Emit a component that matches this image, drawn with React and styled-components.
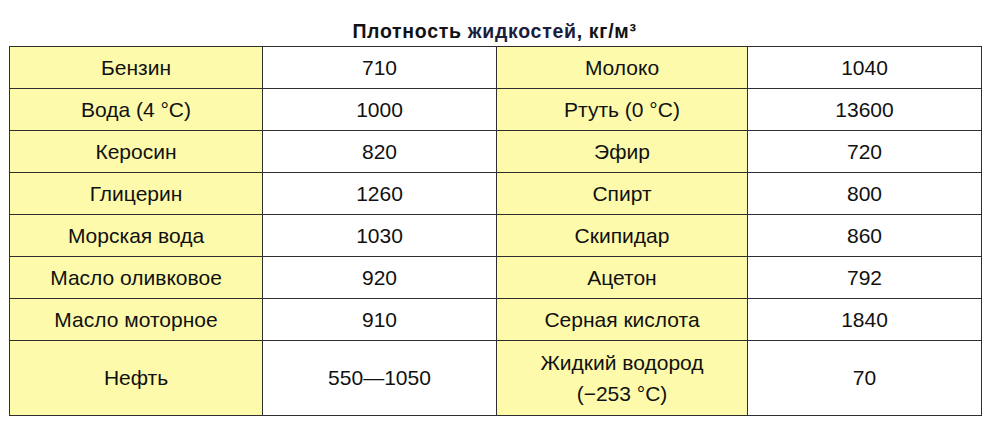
import React from 'react';
import styled, { createGlobalStyle } from 'styled-components';

const GlobalStyle = createGlobalStyle`
  html, body {
    margin: 0;
    padding: 0;
    background: #ffffff;
  }
  body {
    font-family: 'Liberation Sans', Arial, sans-serif;
    color: #111111;
  }
`;

const Page = styled.div`
  width: 993px;
  height: 441px;
  padding: 0 0 0 9px;
  box-sizing: border-box;
`;

const Title = styled.h1`
  margin: 0;
  width: 971px;
  height: 46px;
  box-sizing: border-box;
  padding-top: 20px;
  text-align: center;
  font-size: 19.5px;
  line-height: 23px;
  letter-spacing: 0.7px;
  font-weight: bold;
  color: #121214;
`;

const Accent = styled.span`
  color: #1a1d3c;
`;

const Table = styled.table`
  border-collapse: collapse;
  table-layout: fixed;
  width: 972px;
  font-size: 21px;
`;

const Row = styled.tr`
  height: ${({ tall }) => (tall ? '75px' : '42px')};
`;

const Cell = styled.td`
  border: 1.5px solid #2e2e2e;
  padding: 0;
  text-align: center;
  vertical-align: middle;
  line-height: ${({ twoLine }) => (twoLine ? '31px' : '22px')};
  background: ${({ name }) => (name ? '#fdfbab' : '#ffffff')};
  color: #111111;
  white-space: nowrap;
`;

const rows = [
  ['Бензин', '710', 'Молоко', '1040'],
  ['Вода (4 °C)', '1000', 'Ртуть (0 °C)', '13600'],
  ['Керосин', '820', 'Эфир', '720'],
  ['Глицерин', '1260', 'Спирт', '800'],
  ['Морская вода', '1030', 'Скипидар', '860'],
  ['Масло оливковое', '920', 'Ацетон', '792'],
  ['Масло моторное', '910', 'Серная кислота', '1840'],
];

const App = () => {
  return (
    <>
      <GlobalStyle />
      <Page>
        <Title>
          Плотность <Accent>жидкостей</Accent>, кг/м³
        </Title>
        <Table>
          <colgroup>
            <col style={{ width: 253 }} />
            <col style={{ width: 234 }} />
            <col style={{ width: 251 }} />
            <col style={{ width: 234 }} />
          </colgroup>
          <tbody>
            {rows.map((r) => (
              <Row key={r[0]}>
                <Cell name>{r[0]}</Cell>
                <Cell>{r[1]}</Cell>
                <Cell name>{r[2]}</Cell>
                <Cell>{r[3]}</Cell>
              </Row>
            ))}
            <Row tall>
              <Cell name>Нефть</Cell>
              <Cell>550—1050</Cell>
              <Cell name twoLine>
                Жидкий водород
                <br />
                (−253 °C)
              </Cell>
              <Cell>70</Cell>
            </Row>
          </tbody>
        </Table>
      </Page>
    </>
  );
};

export default App;
